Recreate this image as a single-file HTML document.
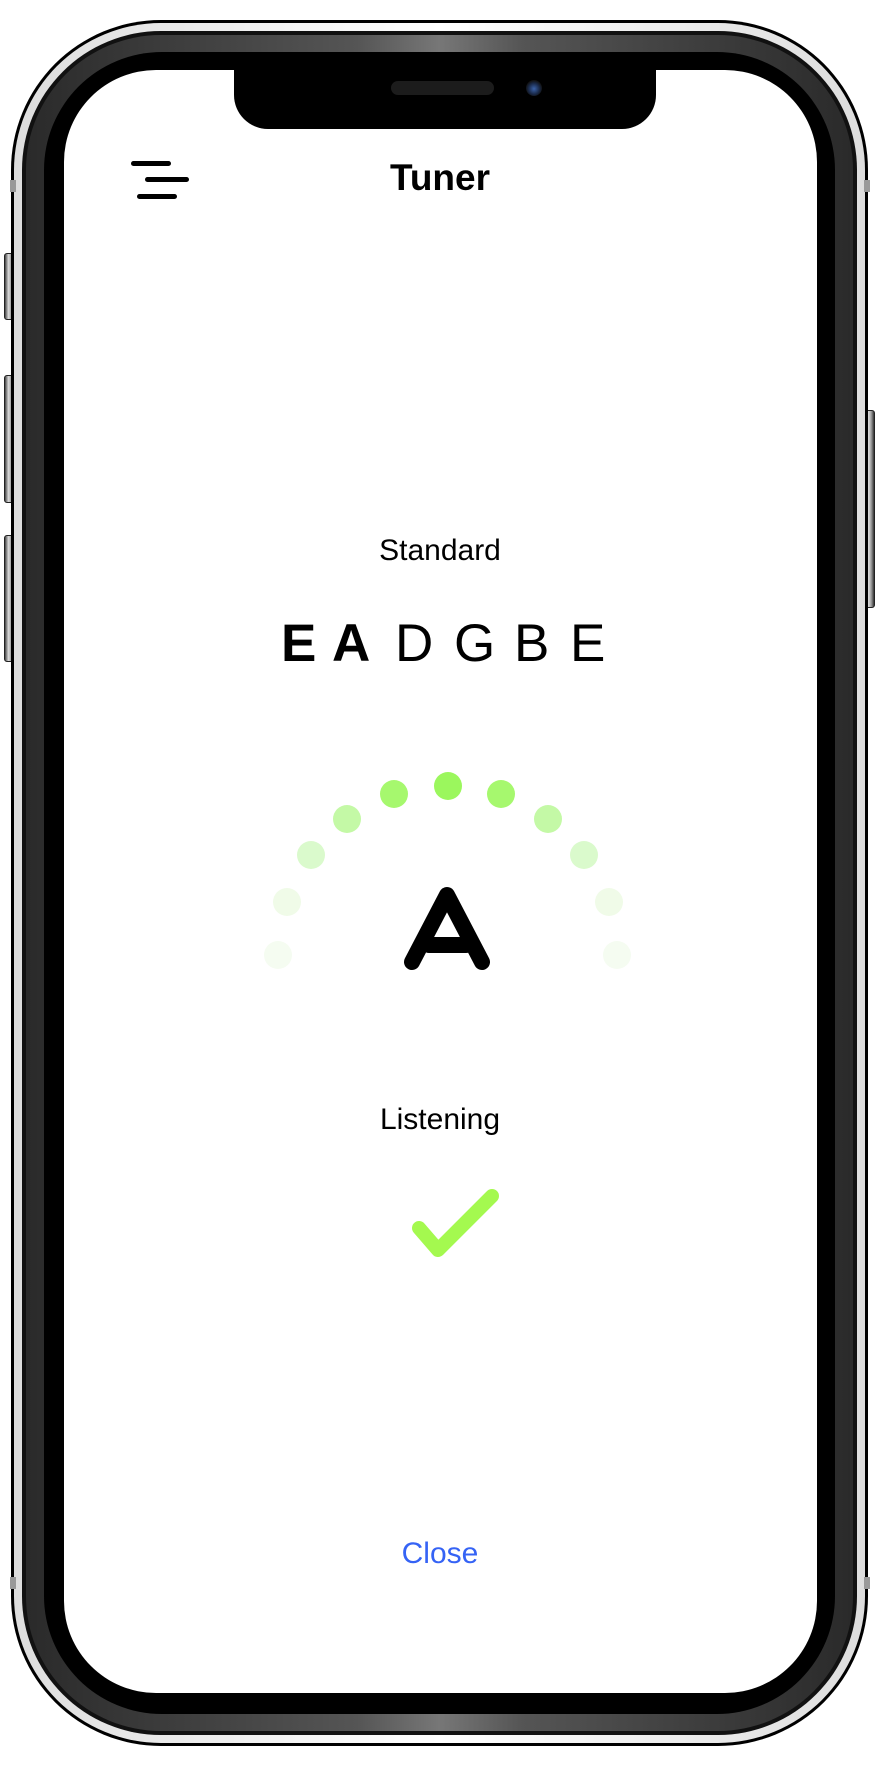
<!DOCTYPE html>
<html><head><meta charset="utf-8"><style>
html,body{margin:0;padding:0;background:#fff;}
body{width:880px;height:1782px;position:relative;overflow:hidden;font-family:"Liberation Sans",sans-serif;}
.a{position:absolute;}
.btn{position:absolute;background:linear-gradient(90deg,#444,#ddd 40%,#999 70%,#333);border-radius:3px;border:1px solid #222;}
</style></head><body>
<div class="btn" style="left:4px;top:253px;width:9px;height:65px"></div>
<div class="btn" style="left:4px;top:375px;width:9px;height:126px"></div>
<div class="btn" style="left:4px;top:535px;width:9px;height:125px"></div>
<div class="btn" style="left:864px;top:410px;width:9px;height:196px"></div>
<div class="a" style="left:11px;top:20px;width:857px;height:1726px;border-radius:150px;background:#000"></div>
<div class="a" style="left:14px;top:23px;width:851px;height:1720px;border-radius:147px;background:linear-gradient(90deg,#ddd,#fff 50%,#ddd)"></div>
<div class="a" style="left:22px;top:31px;width:835px;height:1704px;border-radius:139px;background:#111"></div>
<div class="a" style="left:26px;top:35px;width:827px;height:1696px;border-radius:135px;background:linear-gradient(90deg,#2a2a2a,#555 40%,#777 50%,#555 60%,#2a2a2a)"></div>
<div class="a" style="left:44px;top:52px;width:791px;height:1662px;border-radius:118px;background:#000"></div>
<div class="a" style="left:64px;top:70px;width:753px;height:1623px;border-radius:92px;background:#fff"></div>
<div class="a" style="left:10px;top:180px;width:6px;height:12px;background:#999"></div>
<div class="a" style="left:864px;top:180px;width:6px;height:12px;background:#999"></div>
<div class="a" style="left:10px;top:1577px;width:6px;height:12px;background:#999"></div>
<div class="a" style="left:864px;top:1577px;width:6px;height:12px;background:#999"></div>
<!-- notch -->
<div class="a" style="left:234px;top:60px;width:422px;height:69px;background:#000;border-radius:0 0 34px 34px"></div>
<div class="a" style="left:391px;top:81px;width:103px;height:14px;border-radius:7px;background:#1c1c1c"></div>
<div class="a" style="left:526px;top:80px;width:16px;height:16px;border-radius:50%;background:radial-gradient(circle at 50% 55%,#3b62a8 0,#1a2a4a 45%,#111 70%)"></div>
<!-- hamburger -->
<div class="a" style="left:131px;top:161px;width:40px;height:5px;border-radius:3px;background:#000"></div>
<div class="a" style="left:145px;top:177px;width:44px;height:5px;border-radius:3px;background:#000"></div>
<div class="a" style="left:137px;top:194px;width:40px;height:5px;border-radius:3px;background:#000"></div>
<div class="a" style="left:335px;top:153px;width:210px;text-align:center;font-size:37px;font-weight:bold;line-height:50px;color:#000">Tuner</div>
<div class="a" style="left:300px;top:531px;width:280px;text-align:center;font-size:30px;line-height:40px;color:#000">Standard</div>
<div class="a" style="left:0;top:612px;width:880px;height:60px;font-size:53px;line-height:64px;color:#000">
<span class="a" style="left:281px;font-weight:bold">E</span>
<span class="a" style="left:332px;font-weight:bold">A</span>
<span class="a" style="left:395px">D</span>
<span class="a" style="left:454px">G</span>
<span class="a" style="left:514px">B</span>
<span class="a" style="left:570px">E</span>
</div>
<svg class="a" style="left:0;top:0" width="880" height="1782">
<circle cx="278" cy="955" r="14" fill="#f5fcf1"/>
<circle cx="287" cy="902" r="14" fill="#f0fbe8"/>
<circle cx="311" cy="855" r="14" fill="#dafacc"/>
<circle cx="347" cy="819" r="14" fill="#c4f9a6"/>
<circle cx="394" cy="794" r="14" fill="#a6f86e"/>
<circle cx="448" cy="786" r="14" fill="#9bf75d"/>
<circle cx="501" cy="794" r="14" fill="#a6f86e"/>
<circle cx="548" cy="819" r="14" fill="#c4f9a6"/>
<circle cx="584" cy="855" r="14" fill="#dafacc"/>
<circle cx="609" cy="902" r="14" fill="#f0fbe8"/>
<circle cx="617" cy="955" r="14" fill="#f5fcf1"/>
<path d="M412 962 L447 895 L482 962 M429 945 L466 945" fill="none" stroke="#000" stroke-width="16" stroke-linecap="round" stroke-linejoin="round"/>
<path d="M419 1228 L438 1250 L492 1196" fill="none" stroke="#a4f94f" stroke-width="14" stroke-linecap="round" stroke-linejoin="round"/>
</svg>
<div class="a" style="left:300px;top:1100px;width:280px;text-align:center;font-size:30px;line-height:40px;color:#000">Listening</div>
<div class="a" style="left:335px;top:1534px;width:210px;text-align:center;font-size:30px;line-height:40px;color:#3563f5">Close</div>
</body></html>
